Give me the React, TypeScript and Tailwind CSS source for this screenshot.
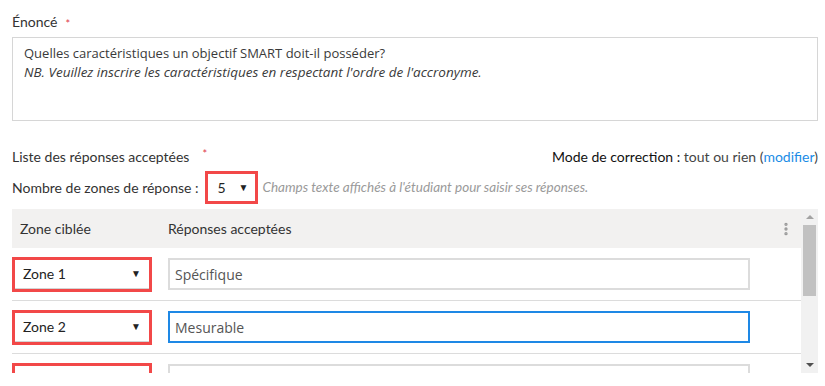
import { EllipsisVertical } from "lucide-react";

const labelFont = { fontFamily: "Lato, 'Noto Sans', sans-serif" };

const ZoneSelect = ({ label }: { label?: string }) => {
  return (
    <div className="w-[140px] h-[35px] border-[3px] border-[#f24848] bg-white shrink-0">
      <div className="h-full flex items-center justify-between pl-[8px] pr-[8px] border-b border-[#d4d4d4] text-[14px] text-[#222]">
        <span>{label}</span>
        {label && <span className="text-[10px] text-[#222]">▼</span>}
      </div>
    </div>
  );
};

const AnswerRow = ({
  zone,
  value,
  focused,
}: {
  zone?: string;
  value?: string;
  focused?: boolean;
}) => {
  return (
    <div className="h-[53px] shrink-0 flex items-center border-b border-[#dcdcdc]">
      <div className="w-[156px] shrink-0">
        <ZoneSelect label={zone} />
      </div>
      <div
        className={
          focused
            ? "w-[582px] h-[32px] border-2 border-[#1e88e5] flex items-center pl-[5px] text-[14px] text-[#555]"
            : "w-[582px] h-[32px] border-2 border-[#dcdcdc] flex items-center pl-[5px] text-[14px] text-[#555]"
        }
        style={{ fontFamily: "'Open Sans', sans-serif" }}
      >
        {value}
      </div>
    </div>
  );
};

export default function App() {
  return (
    <div className="w-[825px] h-[386px] bg-white overflow-hidden pl-[12px] pr-[7px] text-[#333]" style={labelFont}>
      {/* Énoncé */}
      <div className="pt-[11px] h-[33px] flex items-center text-[14px] leading-[22px]">
        <span>Énoncé</span>
        <span className="text-[#e0384a] text-[11px] ml-[8px] self-start mt-[2px]">*</span>
      </div>
      <div
        className="mt-[4px] h-[84px] border border-[#d6d6d6] px-[11px] pt-[6px] text-[13px] leading-[19px] text-[#3a3a3a]"
        style={{ fontFamily: "'Open Sans', sans-serif" }}
      >
        <p>Quelles caractéristiques un objectif SMART doit-il posséder?</p>
        <p className="italic text-[13.5px]">NB. Veuillez inscrire les caractéristiques en respectant l'ordre de l'accronyme.</p>
      </div>

      {/* Liste des réponses */}
      <div className="mt-[24px] h-[22px] flex items-center justify-between text-[14px]">
        <div className="flex items-center">
          <span>Liste des réponses acceptées</span>
          <span className="text-[#e0384a] text-[11px] ml-[13px] self-start">*</span>
        </div>
        <div>
          <span className="text-[#111]">Mode de correction :</span>{" "}
          <span className="text-[#444]">tout ou rien</span>{" "}
          <span className="text-[#444]">
            (<span className="text-[#1a8ce6]">modifier</span>)
          </span>
        </div>
      </div>

      <div className="mt-[4px] h-[33px] flex items-center text-[14px]">
        <span>Nombre de zones de réponse :</span>
        <div className="ml-[6px] w-[53px] h-[33px] border-[3px] border-[#f24848] flex items-center justify-between pl-[10px] pr-[6px] text-[14px] text-[#222]">
          <span>5</span>
          <span className="text-[10px]">▼</span>
        </div>
        <span className="ml-[5px] text-[13.5px] italic text-[#9a9a9a]">
          Champs texte affichés à l'étudiant pour saisir ses réponses.
        </span>
      </div>

      {/* Table */}
      <div className="mt-[5px] h-[164px] flex overflow-hidden">
        <div className="w-[789px] flex flex-col">
          <div className="h-[39px] shrink-0 bg-[#f2f1f0] flex items-center text-[14px] text-[#333]">
            <span className="w-[156px] pl-[8px]">Zone ciblée</span>
            <span className="flex-1">Réponses acceptées</span>
            <EllipsisVertical size={16} className="text-[#9a9a9a] mr-[7px]" strokeWidth={3} />
          </div>
          <AnswerRow zone="Zone 1" value="Spécifique" />
          <AnswerRow zone="Zone 2" value="Mesurable" focused />
          <AnswerRow />
        </div>
        {/* scrollbar */}
        <div className="w-[17px] bg-[#f1f1f1] flex flex-col items-center">
          <div className="h-[16px] flex items-center justify-center">
            <div className="w-0 h-0 border-l-[4px] border-r-[4px] border-b-[4px] border-l-transparent border-r-transparent border-b-[#a3a3a3]" />
          </div>
          <div className="w-[13px] h-[71px] bg-[#c1c1c1]" />
          <div className="flex-1" />
          <div className="h-[16px] flex items-center justify-center">
            <div className="w-0 h-0 border-l-[4px] border-r-[4px] border-t-[4px] border-l-transparent border-r-transparent border-t-[#505050]" />
          </div>
        </div>
      </div>
    </div>
  );
}
